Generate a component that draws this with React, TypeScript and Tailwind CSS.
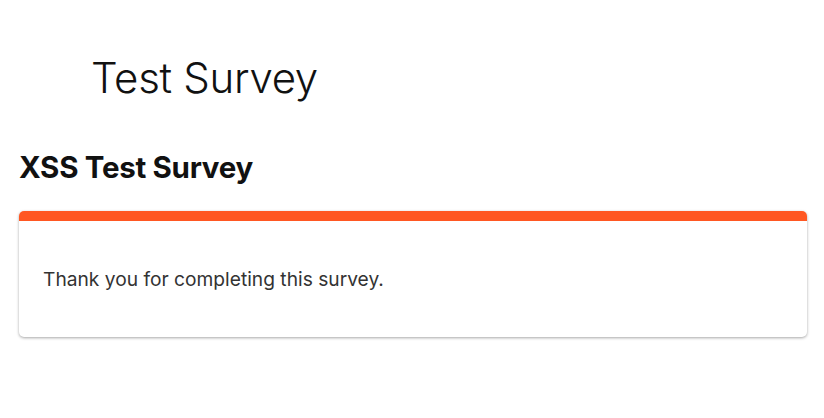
export default function App() {
  return (
    <div className="min-h-screen bg-white pl-[19px] pr-[17px] pt-[46px] font-['Inter',sans-serif] text-[#111]">
      <header className="pl-[72px]">
        <h1 className="text-[42px] font-light leading-[64px] tracking-[-0.3px]">Test Survey</h1>
      </header>

      <h2 className="mt-[37px] text-[29.5px] font-bold leading-[40px] tracking-[-0.3px]">XSS Test Survey</h2>

      <div className="mt-[24px] overflow-hidden rounded-[5px] bg-white shadow-[0_1px_3px_rgba(0,0,0,0.35)]">
        <div className="h-[10px] bg-[#ff5722]" />
        <div className="px-[24px] py-[45px]">
          <p className="text-[19.2px] leading-[26px] text-[#333]">Thank you for completing this survey.</p>
        </div>
      </div>
    </div>
  );
}
